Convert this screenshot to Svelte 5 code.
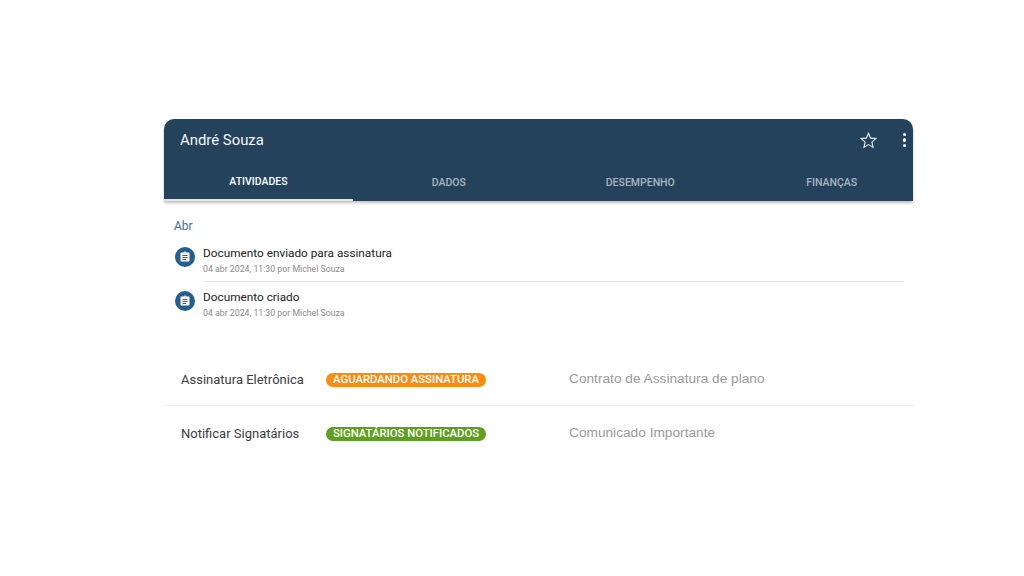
<script>
  const tabs = ['ATIVIDADES', 'DADOS', 'DESEMPENHO', 'FINANÇAS'];
  const items = ['Documento enviado para assinatura', 'Documento criado'];
  const rows = [
    { label: 'Assinatura Eletrônica', badge: 'AGUARDANDO ASSINATURA', cls: 'orange', doc: 'Contrato de Assinatura de plano' },
    { label: 'Notificar Signatários', badge: 'SIGNATÁRIOS NOTIFICADOS', cls: 'green', doc: 'Comunicado Importante' }
  ];
</script>

<div class="page">
  <section class="card">
    <header class="head">
      <div class="top">
        <h1>André Souza</h1>
        <svg class="star" viewBox="0 0 24 24" width="21" height="21" aria-hidden="true">
          <path d="M22 9.24l-7.19-.62L12 2 9.19 8.63 2 9.24l5.46 4.73L5.82 21 12 17.27 18.18 21l-1.63-7.03L22 9.24zM12 15.9l-4.3 2.6 1.14-4.9-3.8-3.3 5-.43L12 5.3l1.96 4.57 5 .43-3.8 3.3 1.14 4.9L12 15.9z"/>
        </svg>
        <span class="dots" aria-hidden="true"><i></i><i></i><i></i></span>
      </div>
      <nav class="tabs">
        {#each tabs as t, i}
          <div class="tab" class:active={i === 0}>{t}</div>
        {/each}
      </nav>
    </header>

    <div class="activity">
      <div class="month">Abr</div>
      {#each items as it, i}
        <div class="item">
          <span class="ico">
            <svg viewBox="0 0 24 24" width="12" height="12" aria-hidden="true">
              <path fill="#fff" d="M19 3h-4.18C14.4 1.84 13.3 1 12 1s-2.4.84-2.82 2H5c-1.1 0-2 .9-2 2v14c0 1.1.9 2 2 2h14c1.1 0 2-.9 2-2V5c0-1.1-.9-2-2-2zm-7 0c.55 0 1 .45 1 1s-.45 1-1 1-1-.45-1-1 .45-1 1-1zM7 8h10v2H7V8zm0 4h10v2H7v-2zm0 4h7v2H7v-2z"/>
            </svg>
          </span>
          <div class="body" class:last={i === items.length - 1}>
            <div class="title">{it}</div>
            <div class="meta">04 abr 2024, 11:30 por Michel Souza</div>
          </div>
        </div>
      {/each}
    </div>

    <div class="rows">
      {#each rows as r}
        <div class="row">
          <span class="label">{r.label}</span>
          <span class="badge {r.cls}">{r.badge}</span>
          <span class="doc">{r.doc}</span>
        </div>
      {/each}
    </div>
  </section>
</div>

<style>
  :global(body) { margin: 0; background: #fff; }
  .page { padding: 119px 0 0 164px; font-family: Roboto, "Liberation Sans", sans-serif; }
  .card { width: 749px; }
  .head {
    background: #24425c;
    border-radius: 10px 10px 0 0;
    overflow: hidden;
    height: 82px;
    box-shadow: 0 2px 3px rgba(0,0,0,.25);
    color: #fff;
    display: flex;
    flex-direction: column;
  }
  .top { display: flex; align-items: center; height: 42px; padding: 0 6px 0 16px; flex: none; margin-bottom: 2px; }
  h1 { margin: 0; font-size: 14.9px; font-weight: 400; flex: 1; color: #f4f6f8; }
  .star { fill: #e6eaee; margin-right: 24px; }
  .dots { display: flex; flex-direction: column; gap: 2px; width: 4px; }
  .dots i { width: 3.4px; height: 3.4px; border-radius: 50%; background: #fff; }
  .tabs { display: flex; height: 38px; flex: none; }
  .tab {
    flex: none;
    width: 191.5px;
    display: flex;
    align-items: center;
    justify-content: center;
    font-size: 10.5px;
    font-weight: 500;
    color: #a9b5c0;
    box-sizing: border-box;
  }
  .tab.active { color: #fff; width: 189px; border-bottom: 2px solid #e4e7ea; }
  .activity { padding: 18px 9px 0 10px; }
  .month { font-size: 12px; color: #3f6c99; line-height: 14px; margin-bottom: 11px; }
  .item { display: flex; gap: 8px; margin-bottom: 6px; }
  .ico {
    flex: none;
    width: 20px;
    height: 20px;
    margin: 3px 0 0 1px;
    border-radius: 50%;
    background: #235f8e;
    display: flex;
    align-items: center;
    justify-content: center;
  }
  .body { flex: 1; height: 38px; box-sizing: border-box; padding-top: 2px; border-bottom: 1px solid #e8e8e8; }
  .body.last { border-bottom: 0; }
  .title { font-size: 11.8px; line-height: 14px; color: #222; }
  .meta { font-size: 8.75px; line-height: 10px; color: #8a8a8a; margin-top: 4px; }
  .rows { margin-top: 26px; }
  .row { display: flex; align-items: center; height: 53px; padding: 2px 0 0 17px; box-sizing: border-box; }
  .row + .row { border-top: 1px solid #ececec; height: 54px; padding-top: 1px; }
  .label { width: 145px; flex: none; font-size: 13px; color: #3c3c3c; }
  .badge {
    width: 160px;
    flex: none;
    box-sizing: border-box;
    height: 14px;
    margin-top: 1px;
    border-radius: 7px;
    font-size: 11.3px;
    font-weight: 500;
    line-height: 14px;
    text-align: center;
    color: #fff;
    white-space: nowrap;
  }
  .orange { background: #fb8c0f; }
  .green { background: #5f9f1f; }
  .doc { margin: -2px 0 0 83px; font-family: "Liberation Sans", sans-serif; font-size: 13.7px; color: #9a9a9a; }
</style>
